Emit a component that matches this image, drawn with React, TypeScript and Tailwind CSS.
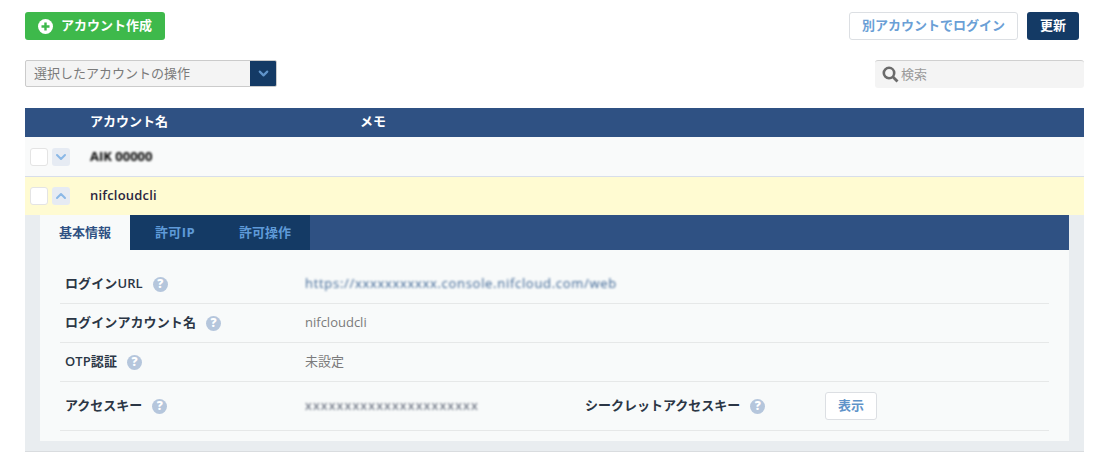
import { ChevronDown, ChevronUp } from "lucide-react";

const font = { fontFamily: '"Open Sans", "Noto Sans CJK JP", sans-serif' };

function HelpIcon() {
  return (
    <span className="ml-[10px] flex h-[15px] w-[15px] items-center justify-center rounded-full bg-[#b5c6dc] text-[12px] leading-none font-extrabold text-white">
      ?
    </span>
  );
}

function RowCheck({ open }: { open: boolean }) {
  return (
    <div className="flex w-[65px] items-center gap-[4px] pl-[5px]">
      <div className="h-[18px] w-[18px] rounded-[3px] border border-[#e4e4e4] bg-white" />
      <div className="flex h-[18px] w-[18px] items-center justify-center rounded-[3px] bg-[#e6ebf3]">
        {open ? (
          <ChevronUp size={16} strokeWidth={3} className="text-[#8ab8e6]" />
        ) : (
          <ChevronDown size={16} strokeWidth={3} className="text-[#8ab8e6]" />
        )}
      </div>
    </div>
  );
}

function InfoRow({ label, children }: { label: string; children: React.ReactNode }) {
  return (
    <div className="flex h-[39px] items-center border-b border-[#e6e8e8] pl-[5px]">
      <div className="flex w-[240px] items-center text-[13px] font-semibold tracking-[0.1px] text-[#2b3645]">
        {label}
        <HelpIcon />
      </div>
      {children}
    </div>
  );
}

export default function App() {
  return (
    <div style={font} className="h-[468px] w-[1107px] overflow-hidden bg-white pt-[12px] pr-[23px] pl-[25px]">
      <div className="flex items-center justify-between">
        <button className="flex h-[28px] w-[140px] items-center rounded-[3px] bg-[#3eb94b] pl-[13px] text-[13px] font-bold text-white">
          <svg width="15" height="15" viewBox="0 0 15 15" className="mr-[8px]">
            <circle cx="7.5" cy="7.5" r="7.5" fill="#fff" />
            <path d="M7.5 3.5v8M3.5 7.5h8" stroke="#3eb94b" strokeWidth="2.4" />
          </svg>
          アカウント作成
        </button>
        <div className="flex items-center gap-[9px] pr-[5px]">
          <button className="h-[28px] w-[169px] rounded-[3px] border border-[#dcdfe3] bg-white text-[13px] font-semibold text-[#6a9fd6]">
            別アカウントでログイン
          </button>
          <button className="h-[28px] w-[52px] rounded-[3px] bg-[#143a65] text-[13px] font-bold text-white">
            更新
          </button>
        </div>
      </div>

      <div className="mt-[20px] flex items-start justify-between">
        <div className="flex h-[27px] w-[252px] overflow-hidden rounded-[2px] border border-[#cbcbcb] bg-[#f4f4f4]">
          <div className="flex-1 pl-[8px] text-[13px] leading-[24px] text-[#7a7a7a]">選択したアカウントの操作</div>
          <div className="flex w-[26px] items-center justify-center bg-[#143a65]">
            <ChevronDown size={15} strokeWidth={3.5} className="text-[#5f93c9]" />
          </div>
        </div>
        <div className="flex h-[28px] w-[209px] items-center rounded-[3px] border-t border-[#d0d0d0] bg-[#f4f4f4] pl-[7px] text-[13px] text-[#9a9a9a]">
          <svg width="17" height="17" viewBox="0 0 17 17" fill="none" className="mr-[2px]">
            <circle cx="7" cy="7" r="5.2" stroke="#6b6b6b" strokeWidth="2.6" />
            <path d="M10.8 10.8 15.5 15.5" stroke="#6b6b6b" strokeWidth="2.8" />
          </svg>
          検索
        </div>
      </div>

      <div className="mt-[20px] flex h-[29px] items-center bg-[#2f5183] pb-[2px] text-[13px] font-bold text-white">
        <div className="w-[65px]" />
        <div className="w-[270px]">アカウント名</div>
        <div>メモ</div>
      </div>

      <div className="flex h-[40px] items-center border-b border-[#d8deea] bg-[#f9fafa]">
        <RowCheck open={false} />
        <div className="text-[13px] font-bold text-[#000000] blur-[0.8px]">AIK 00000</div>
      </div>
      <div className="flex h-[38px] items-center bg-[#fffbd2]">
        <RowCheck open />
        <div className="text-[13px] font-semibold tracking-[0.2px] text-[#2b2540]">nifcloudcli</div>
      </div>

      <div className="h-[237px] border-b border-[#d9dcdf] bg-[#e9edf0] pr-[15px] pl-[15px]">
        <div className="flex h-[35px] bg-[#2f5183] text-[13px] font-bold">
          <div className="flex w-[90px] items-center justify-center bg-[#f8fafa] text-[#2f5183]">基本情報</div>
          <div className="flex w-[180px] bg-[#143a65] text-[#5f9ad8]">
            <div className="flex w-[90px] items-center justify-center tracking-[0.4px]">許可IP</div>
            <div className="flex w-[90px] items-center justify-center">許可操作</div>
          </div>
        </div>
        <div className="h-[191px] bg-[#f8fafa] px-[20px] pt-[15px]">
          <InfoRow label="ログインURL">
            <div className="text-[13px] tracking-[0.7px] text-[#3f6796] blur-[0.8px]">https://xxxxxxxxxxx.console.nifcloud.com/web</div>
          </InfoRow>
          <InfoRow label="ログインアカウント名">
            <div className="text-[13px] text-[#7b7b7b]">nifcloudcli</div>
          </InfoRow>
          <InfoRow label="OTP認証">
            <div className="text-[13px] text-[#7b7b7b]">未設定</div>
          </InfoRow>
          <div className="flex h-[49px] items-center border-b border-[#e6e8e8] pl-[5px]">
            <div className="flex w-[240px] items-center text-[13px] font-semibold text-[#2b3645]">
              アクセスキー
              <HelpIcon />
            </div>
            <div className="w-[280px] text-[13px] tracking-[1.1px] text-[#50586a] blur-[0.8px]">xxxxxxxxxxxxxxxxxxxxxx</div>
            <div className="flex w-[240px] items-center text-[13px] font-semibold text-[#2b3645]">
              シークレットアクセスキー
              <HelpIcon />
            </div>
            <button className="h-[28px] w-[52px] rounded-[3px] border border-[#dcdfe3] bg-white text-[13px] font-semibold text-[#5f93c9]">
              表示
            </button>
          </div>
        </div>
      </div>
    </div>
  );
}
